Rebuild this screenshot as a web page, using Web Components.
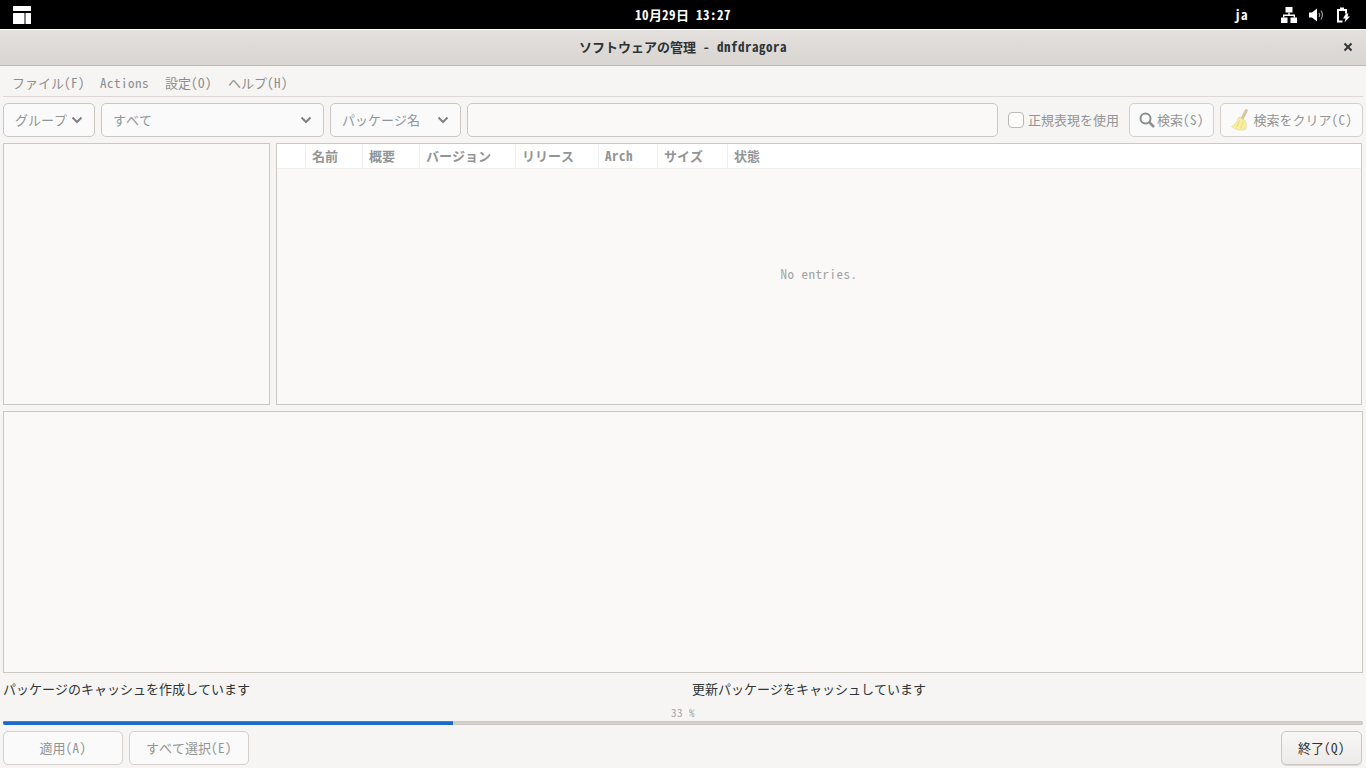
<!DOCTYPE html>
<html lang="ja">
<head>
<meta charset="utf-8">
<title>dnfdragora</title>
<style>
html,body{margin:0;height:100%;background:#f6f5f4}
body{width:1366px;height:768px;overflow:hidden;display:flex;flex-direction:column;
  font:13px/1.2 "Noto Sans Mono CJK JP","Liberation Mono","Noto Sans CJK JP",monospace;color:#2e3436}
</style>
</head>
<body>
<!-- no whitespace in here: x-l is inline and sits between CJK glyphs. Latin cell is 7px in the reference, the font gives 6.5 -->
<template id="t-latin"><style>:host{display:inline;letter-spacing:.5px}</style><slot></slot></template>

<template id="t-top">
<style>
:host{display:grid;grid-template-columns:1fr auto 1fr;align-items:center;height:29px;background:#000;color:#fff;font-weight:700;flex:none}
.left{padding-left:13px;display:flex}
.right{display:flex;justify-content:flex-end;align-items:center;padding-right:15px}
.lang{margin-right:33px}
.ic{display:flex;gap:11px;align-items:center}
svg{display:block}
</style>
<div class="left"><svg width="18" height="18" viewBox="0 0 18 18" fill="#fff"><rect width="18" height="5" rx=".5"/><rect y="7" width="11.500" height="11" rx=".5"/><rect x="12.500" y="7" width="5.500" height="11" rx=".5"/></svg></div>
<div><slot></slot></div>
<div class="right"><span class="lang"><x-l>ja</x-l></span><div class="ic">
<svg width="16" height="16" viewBox="0 0 16 16" fill="#fff"><rect x="4.500" y="0" width="7" height="5.500"/><rect x="0" y="10.500" width="6.500" height="5.500"/><rect x="9.500" y="10.500" width="6.500" height="5.500"/><path d="M7.300 5.500h1.400v2H14v3h-1.400V9H3.400v1.500H2v-3h5.300z"/></svg>
<svg width="16" height="16" viewBox="0 0 16 16" fill="#fff"><path d="M1 5.500h3L9 1.500v13l-5-4H1z"/><path d="M11 6c.8 1.200.8 2.800 0 4M13 3.500c1.600 2.600 1.600 6.400 0 9" fill="none" stroke="#999" stroke-width="1.200"/></svg>
<svg width="16" height="16" viewBox="0 0 16 16" fill="#fff"><path d="M5 .5h4V2h3v4.500h-2V4H4v9.500h3.500v2H2V2h3z"/><path d="M11 6.500L8 11.500h2.500l-1 4 5.500-6h-2.500l1-3z"/></svg>
</div></div>
</template>

<template id="t-title">
<style>
:host{display:flex;align-items:center;justify-content:center;position:relative;flex:none;height:33px;padding-bottom:2px;
  border-top:1px solid #fff;border-bottom:1px solid #bfb8b1;background:linear-gradient(#e3e0dd,#d9d5d1);font-weight:700;color:#2e3436}
svg{position:absolute;right:13px;top:12px}
</style>
<slot></slot>
<svg width="10" height="10" viewBox="0 0 10 10"><path d="M1.500 1.500l7 7M8.500 1.500l-7 7" stroke="#2e3436" stroke-width="2"/></svg>
</template>

<template id="t-menu">
<style>
:host{display:flex;gap:16px;flex:none;height:27px;padding-top:3px;margin:0 3px;padding-left:9px;align-items:center;border-bottom:1px solid #dcd9d5;color:#8b8e8f}
::slotted(:first-child){margin-right:-1px}
</style>
<slot></slot>
</template>

<template id="t-toolbar">
<style>
:host{display:flex;align-items:stretch;flex:none;gap:6px;height:34px;margin:6px 3px 6px 3px}
</style>
<slot></slot>
</template>

<template id="t-combo">
<style>
:host{display:flex;align-items:center;justify-content:space-between;box-sizing:border-box;border:1px solid #cdc7c2;border-radius:5px;padding:0 11px;color:#929595;background:#fafafa}
slot{display:block;padding-bottom:1px}
svg{display:block;flex:none}
</style>
<slot></slot>
<svg width="12" height="8" viewBox="0 0 12 8"><path d="M1.500 1.500L6 6l4.500-4.500" fill="none" stroke="#7e8283" stroke-width="2"/></svg>
</template>

<template id="t-btn">
<style>
:host{display:flex;align-items:center;justify-content:center;box-sizing:border-box;border:1px solid #d5d0cc;border-radius:5px;color:#929595;background:#fafafa;gap:2px}
:host([active]){color:#2e3436;border-color:#cdc7c2;background:linear-gradient(#f8f7f6,#edebe9);box-shadow:0 1px #dcd9d5}
</style>
<slot name="icon"></slot><slot></slot>
</template>

<template id="t-check">
<style>
:host{display:flex;align-items:center;gap:4px;margin:0 4px;color:#929595;white-space:nowrap}
.box{width:14px;height:14px;border:1px solid #bdb8b2;border-radius:4px;background:#fff;flex:none}
</style>
<span class="box"></span><slot></slot>
</template>

<template id="t-panel">
<style>
:host{display:block;box-sizing:border-box;border:1px solid #cdc7c2;background:#faf9f7;min-width:0}
</style>
<slot></slot>
</template>

<template id="t-list">
<style>
:host{display:flex;flex-direction:column;box-sizing:border-box;border:1px solid #cdc7c2;background:#faf9f7}
.head{display:grid;grid-template-columns:29px 57px 57px 96px 83px 59px 70px 1fr;height:24px;background:#fff;border-bottom:1px solid #f2f0ee;color:#929595;font-weight:700;flex:none}
.head span{display:flex;align-items:center;padding:0 0 1px 6px;border-right:1px solid #f0eeec}
.head span:last-child{border:0}
.body{flex:1;display:flex;align-items:center;justify-content:center;color:#a0a3a3;padding-bottom:26px}
</style>
<div class="head"><span></span><span>名前</span><span>概要</span><span>バージョン</span><span>リリース</span><span><x-l>Arch</x-l></span><span>サイズ</span><span>状態</span></div>
<div class="body"><slot></slot></div>
</template>

<template id="t-status">
<style>
:host{display:grid;grid-template-columns:689px 1fr;flex:none;height:31px;margin:0 3px;align-items:center;color:#2e3436}
</style>
<slot></slot>
</template>

<template id="t-progress">
<style>
:host{display:flex;flex-direction:column;flex:none;margin:0 3px;color:#a0a3a3;font-size:11px;text-align:center}
.t{height:17px;line-height:16px}
.bar{height:4px;background:#d5d0cc;border-radius:2px;overflow:hidden;box-shadow:inset 0 0 0 1px #cdc7c2}
.fill{height:100%;width:450px;background:#1b6acb;box-shadow:inset 0 1px #3584e4}
</style>
<div class="t"><slot></slot></div>
<div class="bar"><div class="fill"></div></div>
</template>

<template id="t-actions">
<style>
:host{display:flex;flex:none;gap:6px;height:34px;margin:6px 4px 0 3px}
.sp{flex:1}
</style>
<slot name="l"></slot><div class="sp"></div><slot name="r"></slot>
</template>

<top-bar><x-l>10</x-l>月<x-l>29</x-l>日<x-l> 13:27</x-l></top-bar>
<title-bar><span>ソフトウェアの管理<x-l> - dnfdragora</x-l></span></title-bar>
<menu-bar><span>ファイル<x-l>(F)</x-l></span><span><x-l>Actions</x-l></span><span>設定<x-l>(O)</x-l></span><span>ヘルプ<x-l>(H)</x-l></span></menu-bar>
<tool-bar>
  <x-combo style="width:92px">グループ</x-combo>
  <x-combo style="width:223px">すべて</x-combo>
  <x-combo style="width:131px">パッケージ名</x-combo>
  <x-panel style="width:531px;border-radius:5px"></x-panel>
  <x-check>正規表現を使用</x-check>
  <x-btn style="width:85px"><svg slot="icon" width="16" height="16" viewBox="0 0 16 16"><circle cx="6.500" cy="6.500" r="5" fill="none" stroke="#8b8e8f" stroke-width="2"/><path d="M10 10l5 5" stroke="#8b8e8f" stroke-width="2.500"/></svg><span>検索<x-l>(S)</x-l></span></x-btn>
  <x-btn style="width:143px"><svg slot="icon" width="21" height="24" viewBox="0 0 21 24"><path d="M15.300 2.500L11 11" stroke="#d8c4a0" stroke-width="3" stroke-linecap="round"/><path d="M8 9l6 3.500c1.500 2.500 1.500 5.500.5 9-4.500 1.500-10.500 0-14-3C4 17 6.500 13 8 9z" fill="#f7eea0" stroke="#e6dc92" stroke-width=".8"/><path d="M9 12L5.500 19M12 13.500L10 20.500" stroke="#e3d67f" stroke-width=".8" fill="none"/></svg><span>検索をクリア<x-l>(C)</x-l></span></x-btn>
</tool-bar>
<div style="display:flex;gap:6px;height:262px;margin:0 3px;flex:none">
  <x-panel style="width:267px"></x-panel>
  <pkg-list style="width:1086px"><x-l>No entries.</x-l></pkg-list>
</div>
<x-panel style="height:262px;margin:6px 3px 0 3px;flex:none"></x-panel>
<status-row><span>パッケージのキャッシュを作成しています</span><span>更新パッケージをキャッシュしています</span></status-row>
<x-progress><x-l>33 %</x-l></x-progress>
<action-row>
  <x-btn slot="l" style="width:120px"><span>適用<x-l>(A)</x-l></span></x-btn>
  <x-btn slot="l" style="width:120px"><span>すべて選択<x-l>(E)</x-l></span></x-btn>
  <x-btn slot="r" active style="width:81px"><span>終了<x-l>(Q)</x-l></span></x-btn>
</action-row>

<script>
function reg(name, tpl) {
  customElements.define(name, class extends HTMLElement {
    constructor() {
      super();
      const root = this.attachShadow({ mode: "open" });
      root.appendChild(document.getElementById(tpl).content.cloneNode(true));
    }
  });
}
reg("x-l", "t-latin");
reg("top-bar", "t-top");
reg("title-bar", "t-title");
reg("menu-bar", "t-menu");
reg("tool-bar", "t-toolbar");
reg("x-combo", "t-combo");
reg("x-btn", "t-btn");
reg("x-check", "t-check");
reg("x-panel", "t-panel");
reg("pkg-list", "t-list");
reg("status-row", "t-status");
reg("x-progress", "t-progress");
reg("action-row", "t-actions");
</script>
</body>
</html>
